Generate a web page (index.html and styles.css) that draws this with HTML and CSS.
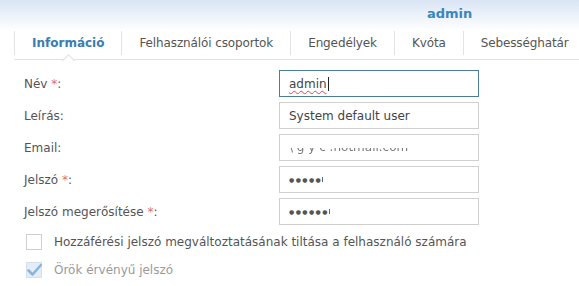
FILE: index.html
```html
<!DOCTYPE html>
<html lang="hu">
<head>
<meta charset="utf-8">
<title>admin</title>
<link rel="stylesheet" href="styles.css">
</head>
<body>
<div class="header"><span class="user">admin</span></div>
<div class="tabs">
  <div class="tab active">Információ<span class="notch"></span></div>
  <div class="tab">Felhasználói csoportok</div>
  <div class="tab">Engedélyek</div>
  <div class="tab">Kvóta</div>
  <div class="tab">Sebességhatár</div>
</div>
<div class="form">
  <div class="row"><label>Név <span class="req">*</span>:</label><div class="field focus"><span class="spell">admin</span><span class="caret"></span></div></div>
  <div class="row"><label>Leírás:</label><div class="field">System default user</div></div>
  <div class="row"><label>Email:</label><div class="field"><span class="hidden-val">\ g y c .hotmail.com</span></div></div>
  <div class="row"><label>Jelszó <span class="req">*</span>:</label><div class="field"><span class="dots">●●●●●</span><span class="pcaret"></span></div></div>
  <div class="row"><label>Jelszó megerősítése <span class="req">*</span>:</label><div class="field"><span class="dots">●●●●●●</span><span class="pcaret"></span></div></div>
</div>
<div class="checks">
  <div class="check"><span class="box"></span>Hozzáférési jelszó megváltoztatásának tiltása a felhasználó számára</div>
  <div class="check disabled"><span class="box checked"><svg width="16" height="16" viewBox="0 0 16 16"><polyline points="2.5,8.5 6.5,12.5 15,3" fill="none" stroke="#86b6df" stroke-width="2.6" stroke-linecap="round" stroke-linejoin="round"/></svg></span>Örök érvényű jelszó</div>
</div>
</body>
</html>
```
FILE: styles.css
```css
html, body {
  margin: 0;
  padding: 0;
}
body {
  width: 579px;
  height: 286px;
  overflow: hidden;
  background: #fff;
  font-family: "DejaVu Sans", "Verdana", sans-serif;
  font-size: 12px;
  color: #555;
}
.header {
  height: 31px;
  box-sizing: border-box;
  padding: 6px 0 0 427px;
  background: linear-gradient(#d9e5f4, #ffffff);
}
.user {
  font-weight: bold;
  font-size: 13px;
  color: #3b86bd;
}
.tabs {
  display: flex;
  align-items: flex-start;
  margin-left: 14px;
  height: 28px;
  border-bottom: 1px solid #e2e2e2;
}
.tab {
  position: relative;
  height: 24px;
  line-height: 24px;
  padding: 0 17px;
  border-left: 1px solid #e3e3e3;
  color: #555;
  white-space: nowrap;
  letter-spacing: -0.12px;
}
.tab.active {
  font-weight: bold;
  color: #3a7db0;
  letter-spacing: 0;
}
.notch {
  position: absolute;
  top: 25px;
  left: calc(50% - 4px);
  width: 8px;
  height: 8px;
  background: #fff;
  border-top: 1px solid #dedede;
  border-left: 1px solid #dedede;
  transform: rotate(45deg);
}
.form {
  display: flex;
  flex-direction: column;
  gap: 5px;
  padding: 10px 0 0 24px;
}
.row {
  display: flex;
  align-items: center;
  height: 27px;
}
.row label {
  width: 255px;
  color: #555;
}
.req {
  color: #e07070;
}
.field {
  width: 200px;
  height: 27px;
  box-sizing: border-box;
  border: 1px solid #cfcfcf;
  padding-left: 9px;
  display: flex;
  align-items: center;
  color: #444;
}
.field.focus {
  border-color: #4b7d96;
}
.spell {
  text-decoration: underline wavy #e04848;
  text-decoration-thickness: 1px;
  text-underline-offset: 2px;
}
.caret {
  display: inline-block;
  width: 1px;
  height: 14px;
  background: #222;
  margin-left: 1px;
}
.hidden-val {
  color: #7a7a7a;
  line-height: 14px;
  margin-top: -2px;
  -webkit-mask-image: linear-gradient(transparent 55%, #000 55%);
  mask-image: linear-gradient(transparent 55%, #000 55%);
}
.dots {
  font-size: 6px;
  letter-spacing: 1.4px;
  color: #555;
}
.pcaret {
  display: inline-block;
  width: 1px;
  height: 5px;
  background: #666;
}
.checks {
  display: flex;
  flex-direction: column;
  gap: 12px;
  padding: 9px 0 0 26px;
}
.check {
  display: flex;
  align-items: center;
  height: 16px;
  color: #555;
}
.box {
  width: 16px;
  height: 16px;
  box-sizing: border-box;
  border: 1px solid #cfcfcf;
  margin-right: 12px;
  flex: none;
}
.box.checked {
  background: #e4edf5;
  border-color: #d6e0ea;
}
.box svg {
  display: block;
  margin: -1px;
}
.check.disabled {
  color: #9a9a9a;
}
```
